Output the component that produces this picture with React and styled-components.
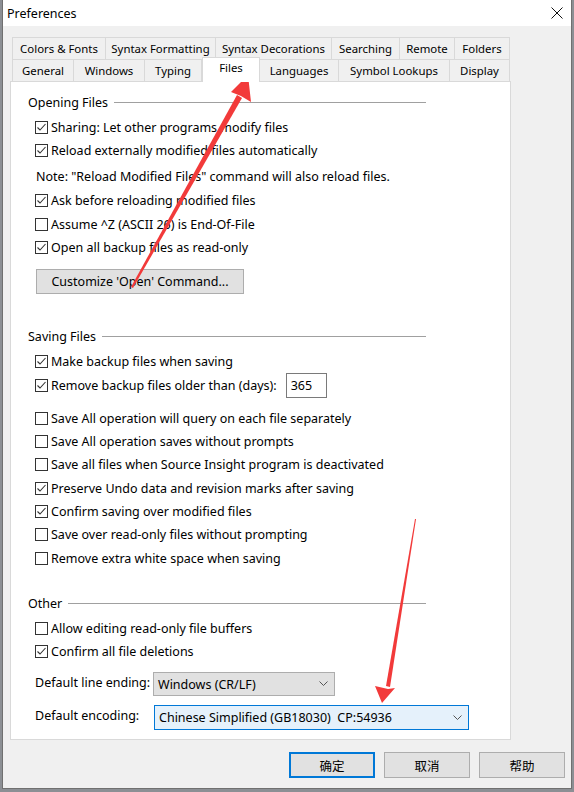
import React from 'react'
import styled, { createGlobalStyle } from 'styled-components'

const GlobalStyle = createGlobalStyle`
  html, body {
    margin: 0;
    padding: 0;
    background: #8c8f94;
    font-family: "Noto Sans", "Noto Sans CJK SC", sans-serif;
  }
`

const tabRows = [
  [
    { label: 'Colors & Fonts', w: 94 },
    { label: 'Syntax Formatting', w: 110 },
    { label: 'Syntax Decorations', w: 116 },
    { label: 'Searching', w: 68 },
    { label: 'Remote', w: 55 },
    { label: 'Folders', w: 55 }
  ],
  [
    { label: 'General', w: 62 },
    { label: 'Windows', w: 71 },
    { label: 'Typing', w: 57 },
    { label: 'Files', w: 58, active: true },
    { label: 'Languages', w: 79 },
    { label: 'Symbol Lookups', w: 111 },
    { label: 'Display', w: 60 }
  ]
]

const Page = styled.div`
  position: relative;
  width: 574px;
  height: 792px;
  padding: 0 0 0 2px;
  box-sizing: border-box;
`

const Window = styled.div`
  width: 570px;
  height: 789px;
  box-sizing: border-box;
  border: 1px solid #707070;
  border-top: none;
  background: #f0f0f0;
  display: flex;
  flex-direction: column;
  font-size: 12px;
  color: #000;
`

const TitleBar = styled.div`
  height: 26px;
  background: #fff;
  display: flex;
  align-items: center;
  justify-content: space-between;
  padding: 0 8px 0 4px;
  font-size: 12.5px;
`

const Body = styled.div`
  flex: 1;
  display: flex;
  flex-direction: column;
  padding: 11px 6px 0 7px;
`

const TabRow = styled.div`
  display: flex;
  height: 22px;
  padding-left: 2px;
  position: relative;
  z-index: ${p => (p.$front ? 2 : 1)};
`

const Tab = styled.div`
  width: ${p => p.$w}px;
  box-sizing: border-box;
  border: 1px solid #d9d9d9;
  border-left: ${p => (p.$first ? '1px solid #d9d9d9' : 'none')};
  border-bottom: none;
  background: #f0f0f0;
  display: flex;
  align-items: center;
  justify-content: center;
  white-space: nowrap;
  font-size: 11.4px;

  &.active {
    background: #fff;
    border: 1px solid #d9d9d9;
    border-bottom: none;
    margin-top: -2px;
    height: 25px;
    align-items: flex-start;
    padding-top: 2px;
  }
`

const Panel = styled.div`
  width: 501px;
  height: 659px;
  box-sizing: border-box;
  background: #fff;
  border: 1px solid #d9d9d9;
  padding: 12px 0 0 17px;
  display: flex;
  flex-direction: column;
`

const GroupHeader = styled.div`
  display: flex;
  align-items: center;
  width: 398px;
  height: 16px;
  margin-top: ${p => p.$mt || 0}px;
  font-size: 12.5px;

  &::after {
    content: '';
    flex: 1;
    height: 1px;
    background: #a0a0a0;
    margin-left: 6px;
  }
`

const Row = styled.div`
  display: flex;
  align-items: center;
  height: ${p => p.$h || 23}px;
  margin-top: ${p => p.$mt || 0}px;
  padding-left: 7px;
  font-size: 12.5px;
  white-space: nowrap;
`

const Box = styled.span`
  width: 13px;
  height: 13px;
  box-sizing: border-box;
  border: 1px solid #333;
  background: #fff;
  margin-right: 3px;
  display: inline-flex;
  flex-shrink: 0;
`

const Note = styled(Row)`
  padding-left: 8px;
`

const PushButton = styled.div`
  width: 208px;
  height: 25px;
  box-sizing: border-box;
  margin: ${p => p.$mt}px 0 0 8px;
  border: 1px solid #adadad;
  background: #e1e1e1;
  display: flex;
  align-items: center;
  justify-content: center;
  font-size: 12.5px;
`

const NumberField = styled.div`
  width: 41px;
  height: 25px;
  box-sizing: border-box;
  border: 1px solid #7a7a7a;
  margin-left: 9px;
  padding-left: 4px;
  display: flex;
  align-items: center;
`

const FieldRow = styled.div`
  display: flex;
  align-items: flex-start;
  margin-top: ${p => p.$mt}px;
  padding-left: 7px;
  font-size: 12.5px;
`

const FieldLabel = styled.span`
  width: ${p => p.$w}px;
  padding-top: 2px;
  white-space: nowrap;
`

const Select = styled.div`
  width: ${p => p.$w}px;
  height: ${p => p.$h}px;
  box-sizing: border-box;
  border: 1px solid ${p => (p.$focus ? '#0078d7' : '#adadad')};
  background: ${p => (p.$focus ? '#e5f1fb' : '#e1e1e1')};
  display: flex;
  align-items: center;
  justify-content: space-between;
  padding: 0 6px 0 4px;
  white-space: pre;
`

const Footer = styled.div`
  display: flex;
  justify-content: flex-end;
  gap: 9px;
  padding: 12px 0 0 0;
`

const DialogButton = styled.div`
  width: 86px;
  height: 26px;
  box-sizing: border-box;
  border: ${p => (p.$default ? '2px solid #0078d7' : '1px solid #adadad')};
  background: #e1e1e1;
  display: flex;
  align-items: center;
  justify-content: center;
  font-family: "Noto Sans CJK SC", sans-serif;
  font-size: 12.5px;
`

const Overlay = styled.svg`
  position: absolute;
  left: 0;
  top: 0;
  pointer-events: none;
`

const Check = ({ on }) => (
  <Box>
    {on && (
      <svg width="11" height="11" viewBox="0 0 11 11">
        <polyline points="1.5,5.5 4,8 9.5,2" fill="none" stroke="#333" strokeWidth="1.1" />
      </svg>
    )}
  </Box>
)

const Chevron = () => (
  <svg width="9" height="6" viewBox="0 0 9 6">
    <polyline points="0.5,0.5 4.5,4.5 8.5,0.5" fill="none" stroke="#555" strokeWidth="1" />
  </svg>
)

const CheckRow = ({ on, children, mt, h }) => (
  <Row $mt={mt} $h={h}>
    <Check on={on} />
    {children}
  </Row>
)

export default function App() {
  return (
    <Page>
      <GlobalStyle />
      <Window>
        <TitleBar>
          <span>Preferences</span>
          <svg width="12" height="12" viewBox="0 0 12 12">
            <path d="M0.5 0.5 L11.5 11.5 M11.5 0.5 L0.5 11.5" stroke="#111" strokeWidth="1" />
          </svg>
        </TitleBar>
        <Body>
          {tabRows.map((row, i) => (
            <TabRow key={i} $front={i === 1}>
              {row.map((t, j) => (
                <Tab key={t.label} $w={t.w} $first={j === 0} className={t.active ? 'active' : ''}>
                  {t.label}
                </Tab>
              ))}
            </TabRow>
          ))}
          <Panel>
            <GroupHeader>Opening Files</GroupHeader>
            <CheckRow on mt={6}>Sharing: Let other programs modify files</CheckRow>
            <CheckRow on>Reload externally modified files automatically</CheckRow>
            <Note $mt={3}>Note: "Reload Modified Files" command will also reload files.</Note>
            <CheckRow on mt={1}>Ask before reloading modified files</CheckRow>
            <CheckRow mt={1}>Assume ^Z (ASCII 26) is End-Of-File</CheckRow>
            <CheckRow on>Open all backup files as read-only</CheckRow>
            <PushButton $mt={10}>Customize 'Open' Command...</PushButton>

            <GroupHeader $mt={34}>Saving Files</GroupHeader>
            <CheckRow on mt={6}>Make backup files when saving</CheckRow>
            <CheckRow on h={25}>
              Remove backup files older than (days):
              <NumberField>365</NumberField>
            </CheckRow>
            <CheckRow mt={9}>Save All operation will query on each file separately</CheckRow>
            <CheckRow>Save All operation saves without prompts</CheckRow>
            <CheckRow>Save all files when Source Insight program is deactivated</CheckRow>
            <CheckRow on mt={1}>Preserve Undo data and revision marks after saving</CheckRow>
            <CheckRow on>Confirm saving over modified files</CheckRow>
            <CheckRow>Save over read-only files without prompting</CheckRow>
            <CheckRow mt={1}>Remove extra white space when saving</CheckRow>

            <GroupHeader $mt={25}>Other</GroupHeader>
            <CheckRow mt={6}>Allow editing read-only file buffers</CheckRow>
            <CheckRow on>Confirm all file deletions</CheckRow>
            <FieldRow $mt={9}>
              <FieldLabel $w={118}>Default line ending:</FieldLabel>
              <Select $w={182} $h={24}>
                <span>Windows (CR/LF)</span>
                <Chevron />
              </Select>
            </FieldRow>
            <FieldRow $mt={9}>
              <FieldLabel $w={119}>Default encoding:</FieldLabel>
              <Select $w={315} $h={25} $focus>
                <span>Chinese Simplified (GB18030)  CP:54936</span>
                <Chevron />
              </Select>
            </FieldRow>
          </Panel>
          <Footer>
            <DialogButton $default>确定</DialogButton>
            <DialogButton>取消</DialogButton>
            <DialogButton>帮助</DialogButton>
          </Footer>
        </Body>
      </Window>
      <Overlay width="574" height="792" viewBox="0 0 574 792">
        <polygon points="131,287 237,95 242,98 133,288" fill="#f23a3a" />
        <polygon points="248,75 251,102 241,96 231,92" fill="#f23a3a" />
        <polygon points="415,519 386,686 390,687 416,519" fill="#f23a3a" />
        <polygon points="382,703 375,686 388,689 395,688" fill="#f23a3a" />
      </Overlay>
    </Page>
  )
}
